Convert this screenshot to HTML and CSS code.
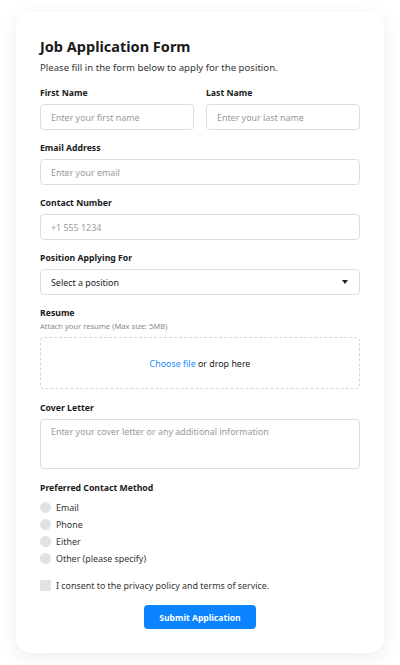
FILE: index.html
```html
<!DOCTYPE html>
<html lang="en">
<head>
  <meta charset="UTF-8" />
  <title>Job Application Form</title>
  <link rel="stylesheet" href="styles.css">
</head>
<body>

<!-- Application card -->
<div class="card">
  <h1>Job Application Form</h1>
  <p class="intro">Please fill in the form below to apply for the position.</p>

  <form>
    <div class="row">
      <div class="field">
        <label>First Name</label>
        <input type="text" placeholder="Enter your first name">
      </div>
      <div class="field">
        <label>Last Name</label>
        <input type="text" placeholder="Enter your last name">
      </div>
    </div>

    <div class="field">
      <label>Email Address</label>
      <input type="email" placeholder="Enter your email">
    </div>

    <div class="field">
      <label>Contact Number</label>
      <input type="tel" placeholder="+1 555 1234">
    </div>

    <div class="field">
      <label>Position Applying For</label>
      <div class="select">
        <span>Select a position</span>
        <span class="caret"></span>
      </div>
    </div>

    <div class="field wide">
      <label>Resume</label>
      <small>Attach your resume (Max size: 5MB)</small>
      <div class="drop">
        <a href="#">Choose file</a>&nbsp;or drop here
      </div>
    </div>

    <div class="field wide">
      <label>Cover Letter</label>
      <textarea placeholder="Enter your cover letter or any additional information"></textarea>
    </div>

    <div class="field last">
      <label>Preferred Contact Method</label>
      <div class="options">
        <div class="option"><span class="radio"></span>Email</div>
        <div class="option"><span class="radio"></span>Phone</div>
        <div class="option"><span class="radio"></span>Either</div>
        <div class="option"><span class="radio"></span>Other (please specify)</div>
      </div>
    </div>

    <div class="consent"><span class="box"></span>I consent to the privacy policy and terms of service.</div>

    <div class="actions">
      <button type="button">Submit Application</button>
    </div>
  </form>
</div>

</body>
</html>
```

FILE: styles.css
```css
body {
  margin: 0;
  padding: 12px 16px;
  font-family: 'Noto Sans', sans-serif;
  background-color: #ffffff;
  color: #222;
}

.card {
  background-color: #fff;
  border-radius: 16px;
  padding: 24px;
  box-shadow: 0 4px 18px rgba(0,0,0,0.08);
}

.card h1 {
  font-size: 14.5px;
  line-height: 20px;
  margin: 0;
  color: #1a1a1a;
}

.intro {
  font-size: 9.6px;
  line-height: 16px;
  margin: 4px 0 10px;
  color: #333;
}

.row {
  display: flex;
  gap: 12px;
}

.row .field {
  flex: 1;
}

.field {
  margin-bottom: 11px;
}

.field.wide {
  margin-bottom: 12px;
}

.field.last {
  margin-bottom: 0;
}

.field label {
  display: block;
  font-size: 8.7px;
  line-height: 14px;
  font-weight: bold;
  color: #1a1a1a;
  margin-bottom: 4px;
}

.field small {
  display: block;
  font-size: 7.6px;
  line-height: 12px;
  color: #888;
  margin: -4px 0 5px;
}

.field input,
.field textarea,
.select {
  display: block;
  box-sizing: border-box;
  width: 100%;
  height: 26px;
  margin: 0;
  border: 1px solid #ddd;
  border-radius: 4px;
  padding: 0 10px;
  font-family: inherit;
  font-size: 8.9px;
  color: #333;
  background: #fff;
}

.field input::placeholder,
.field textarea::placeholder {
  color: #999;
}

.field textarea {
  height: 50px;
  padding-top: 5px;
  resize: none;
}

.select {
  display: flex;
  align-items: center;
  justify-content: space-between;
  color: #222;
}

.caret {
  width: 0;
  height: 0;
  border-left: 3.5px solid transparent;
  border-right: 3.5px solid transparent;
  border-top: 4px solid #222;
  margin-right: 1px;
}

.drop {
  box-sizing: border-box;
  height: 52px;
  border: 1px dashed #d6d6d6;
  border-radius: 4px;
  display: flex;
  align-items: center;
  justify-content: center;
  font-size: 8.9px;
  color: #222;
}

.drop a {
  color: #1a8cff;
  text-decoration: none;
}

.options {
  display: flex;
  flex-direction: column;
}

.option, .consent {
  display: flex;
  align-items: center;
  font-size: 8.9px;
  color: #333;
  height: 17px;
}

.radio {
  width: 11px;
  height: 11px;
  border-radius: 50%;
  background: #e2e2e2;
  margin-right: 5px;
}

.consent {
  margin-top: 10px;
}

.box {
  width: 11px;
  height: 11px;
  border-radius: 2px;
  background: #e2e2e2;
  margin-right: 5px;
}

.actions {
  text-align: center;
  margin-top: 11px;
  line-height: 0;
}

.actions button {
  display: inline-block;
  vertical-align: top;
  background-color: #0a84ff;
  color: #fff;
  border: none;
  border-radius: 4px;
  font-family: inherit;
  font-size: 8.6px;
  line-height: 24px;
  font-weight: bold;
  height: 24px;
  width: 112px;
  cursor: pointer;
}
```
